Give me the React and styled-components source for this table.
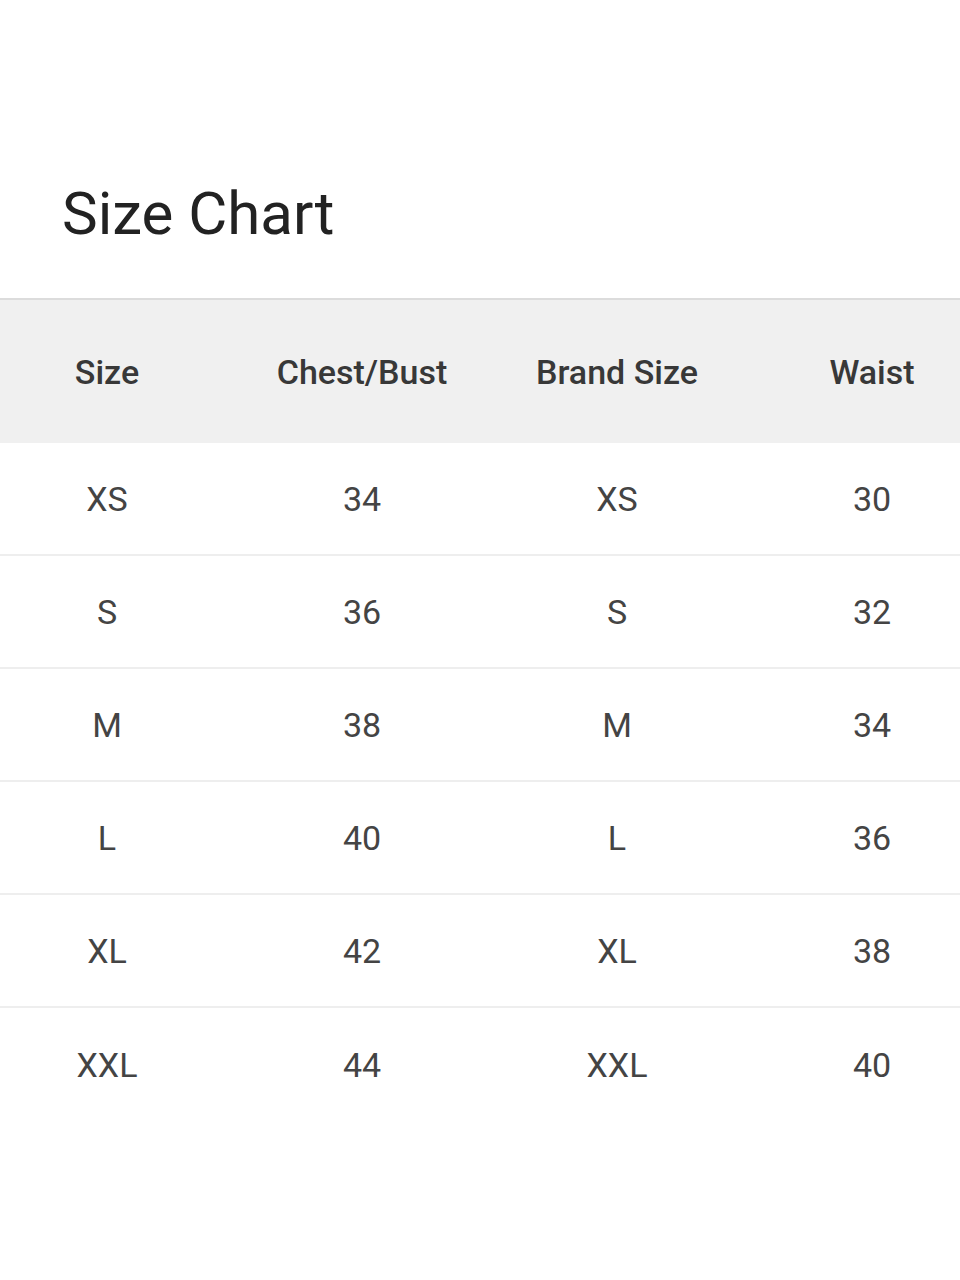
import React from 'react';
import styled, { createGlobalStyle } from 'styled-components';

const rows = [
  ['XS', '34', 'XS', '30'],
  ['S', '36', 'S', '32'],
  ['M', '38', 'M', '34'],
  ['L', '40', 'L', '36'],
  ['XL', '42', 'XL', '38'],
  ['XXL', '44', 'XXL', '40'],
];

export default function App() {
  return (
    <>
      <GlobalStyle />
      <Page>
        <Title>Size Chart</Title>
        <Table>
          <HeadRow>
            <Cell head>Size</Cell>
            <Cell head>Chest/Bust</Cell>
            <Cell head>Brand Size</Cell>
            <Cell head>Waist</Cell>
          </HeadRow>
          {rows.map((r, i) => (
            <BodyRow key={i} last={i === rows.length - 1}>
              {r.map((v, j) => (
                <Cell key={j}>{v}</Cell>
              ))}
            </BodyRow>
          ))}
        </Table>
      </Page>
    </>
  );
}

const GlobalStyle = createGlobalStyle`
  html, body {
    margin: 0;
    padding: 0;
    background: #fff;
    overflow-x: hidden;
  }
  body {
    font-family: Roboto, 'Liberation Sans', sans-serif;
  }
`;

const Page = styled.div`
  width: 960px;
  min-height: 1280px;
  padding-top: 184px;
  box-sizing: border-box;
`;

const Title = styled.h1`
  margin: 0 0 54px 62px;
  font-size: 60px;
  line-height: 1;
  font-weight: 400;
  color: #222;
`;

const Table = styled.div`
  display: flex;
  flex-direction: column;
`;

const RowBase = styled.div`
  display: grid;
  grid-template-columns: repeat(4, 214px);
  column-gap: 41px;
  align-items: center;
  width: 100%;
  box-sizing: border-box;
`;

const HeadRow = styled(RowBase)`
  height: 145px;
  background: #f0f0f0;
  border-top: 2px solid #dcdcdc;
`;

const BodyRow = styled(RowBase)`
  height: 113px;
  border-bottom: ${(p) => (p.last ? 'none' : '2px solid #eeeeee')};
`;

const Cell = styled.div`
  text-align: center;
  white-space: nowrap;
  font-size: 34px;
  font-weight: ${(p) => (p.head ? 500 : 400)};
  color: ${(p) => (p.head ? '#383838' : '#444')};
`;
